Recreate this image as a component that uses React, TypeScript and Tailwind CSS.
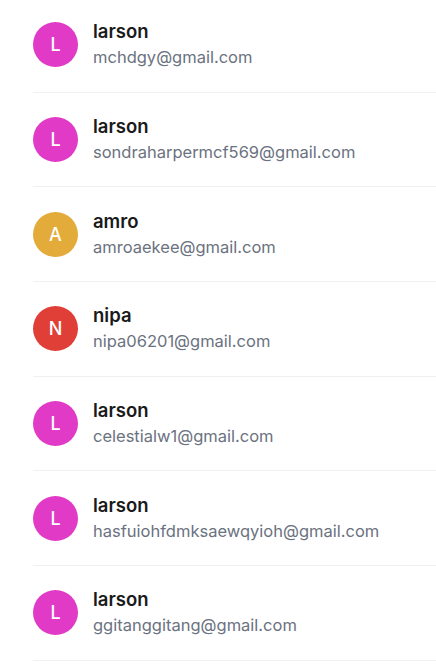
const users = [
  { name: "larson", email: "mchdgy@gmail.com", color: "bg-[#e03ac7]" },
  { name: "larson", email: "sondraharpermcf569@gmail.com", color: "bg-[#e03ac7]" },
  { name: "amro", email: "amroaekee@gmail.com", color: "bg-[#e3ab39]" },
  { name: "nipa", email: "nipa06201@gmail.com", color: "bg-[#df3f36]" },
  { name: "larson", email: "celestialw1@gmail.com", color: "bg-[#e03ac7]" },
  { name: "larson", email: "hasfuiohfdmksaewqyioh@gmail.com", color: "bg-[#e03ac7]" },
  { name: "larson", email: "ggitanggitang@gmail.com", color: "bg-[#e03ac7]" },
]

export default function App() {
  return (
    <div className="h-[668px] overflow-hidden bg-white font-['Inter',sans-serif]">
      <ul className="-mt-[2px] pl-[33px]">
        {users.map((u, i) => (
          <li
            key={i}
            className="flex h-[94.67px] items-center gap-[15px] border-b border-[#f0f0f0]"
          >
            <div
              className={`flex h-[45px] w-[45px] shrink-0 items-center justify-center rounded-full ${u.color} text-[18px] font-medium text-white`}
            >
              {u.name[0].toUpperCase()}
            </div>
            <div className="flex flex-col pb-[2px]">
              <span className="text-[18.5px] leading-[24px] font-semibold text-[#1a1a1a]">
                {u.name}
              </span>
              <span className="mt-[3px] text-[16.5px] leading-[22px] text-[#6b7280]">
                {u.email}
              </span>
            </div>
          </li>
        ))}
      </ul>
    </div>
  )
}
